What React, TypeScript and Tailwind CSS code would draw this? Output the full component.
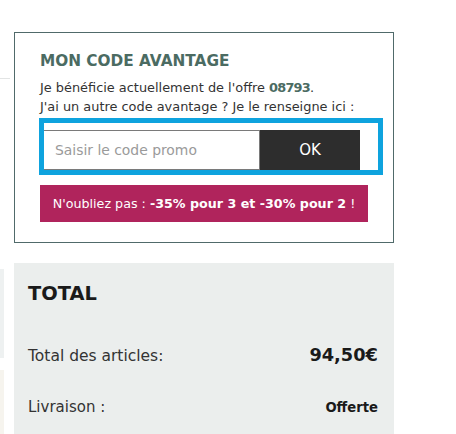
import React from "react";

export default function App() {
  return (
    <div
      className="w-[456px] h-[434px] overflow-hidden bg-white flex"
      style={{ fontFamily: '"DejaVu Sans", "Noto Sans", sans-serif' }}
    >
      {/* clipped bits of neighbouring content */}
      <div className="w-[14px] shrink-0 flex flex-col">
        <div className="mt-[78px] h-px w-[10px] bg-[#e2e4e4]" />
        <div className="mt-[190px] h-[89px] w-[4px] bg-[#eef1f1]" />
        <div className="mt-[12px] h-[64px] w-[4px] bg-[#f6f4ee]" />
      </div>

      <div className="w-[380px] shrink-0 flex flex-col">
        <div className="mt-[32px] h-[211px] border border-[#506a6a] pl-[25px] pt-[18px]">
          <h2 className="text-[15.3px] leading-[20px] font-bold text-[#4b6b62]">
            MON CODE AVANTAGE
          </h2>
          <p className="mt-[8px] text-[12.9px] leading-[18.5px] text-[#333]">
            Je bénéficie actuellement de l'offre{" "}
            <span className="font-bold text-[#4b6b62] tracking-[-0.8px]">08793</span>.
            <br />
            J'ai un autre code avantage ? Je le renseigne ici :
          </p>
          <div className="mt-[2px] -ml-px w-[344px] h-[57px] border-[5px] border-[#0ea3de] pt-[7px] pr-[18px] flex">
            <div className="flex-1 h-[40px] border-y border-r border-[#7a7a7a] flex items-center pl-[11px] text-[13.9px] text-[#9a9a9a]">
              Saisir le code promo
            </div>
            <button className="w-[100px] h-[40px] bg-[#2d2d2d] text-white text-[15px] flex items-center justify-center">
              OK
            </button>
          </div>
          <div className="mt-[10px] w-[328px] h-[37px] bg-[#b0245c] text-white text-[12.7px] flex items-center justify-center">
            <span>
              N'oubliez pas : <span className="font-bold">-35% pour 3 et -30% pour 2</span> !
            </span>
          </div>
        </div>

        <div className="mt-[20px] flex-1 bg-[#ebeeed] pl-[14px] pr-[16px] pt-[19px] text-[#1a1a1a]">
          <h3 className="text-[19.4px] leading-[24px] font-bold">TOTAL</h3>
          <div className="mt-[36px] flex items-baseline justify-between">
            <span className="text-[15.5px] text-[#333]">Total des articles:</span>
            <span className="text-[17.8px] font-bold">94,50€</span>
          </div>
          <div className="mt-[27px] flex items-baseline justify-between">
            <span className="text-[15px] text-[#333]">Livraison :</span>
            <span className="text-[13.2px] font-bold">Offerte</span>
          </div>
        </div>
      </div>
    </div>
  );
}
